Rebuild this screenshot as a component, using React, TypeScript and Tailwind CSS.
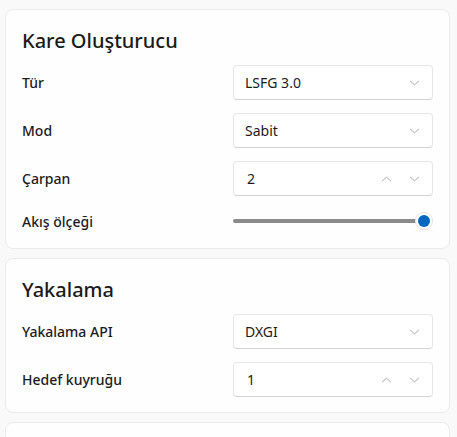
import React from 'react';

const font = { fontFamily: '"Noto Sans", "Open Sans", sans-serif' };

function ChevronDown({ className = '' }: { className?: string }) {
    return (
        <svg viewBox="0 0 12 8" className={className} fill="none" stroke="currentColor" strokeWidth="1" strokeLinecap="round" strokeLinejoin="round">
            <path d="M1.5 2 L6 6 L10.5 2" />
        </svg>
    );
}

function ChevronUp({ className = '' }: { className?: string }) {
    return (
        <svg viewBox="0 0 12 8" className={className} fill="none" stroke="currentColor" strokeWidth="1" strokeLinecap="round" strokeLinejoin="round">
            <path d="M1.5 6 L6 2 L10.5 6" />
        </svg>
    );
}

function ComboBox({ value }: { value: string }) {
    return (
        <div className="w-[200px] h-[35px] flex items-center justify-between pl-[11px] pr-[12px] bg-white rounded-[4px] border border-[#e6e6e6] border-b-[#d2d2d2] text-[14px] text-[#1b1b1b]">
            <span>{value}</span>
            <ChevronDown className="w-[11px] h-[8px] text-[#a0a0a0]" />
        </div>
    );
}

function NumberBox({ value }: { value: string }) {
    return (
        <div className="w-[200px] h-[35px] flex items-center justify-between pl-[13px] pr-[12px] bg-white rounded-[4px] border border-[#e6e6e6] border-b-[#d2d2d2] text-[14px] text-[#1b1b1b]">
            <span>{value}</span>
            <div className="flex items-center gap-[17px]">
                <ChevronUp className="w-[11px] h-[8px] text-[#a0a0a0]" />
                <ChevronDown className="w-[11px] h-[8px] text-[#a0a0a0]" />
            </div>
        </div>
    );
}

function Slider() {
    return (
        <div className="w-[200px] h-[24px] flex items-center">
            <div className="flex-1 h-[4px] rounded-full bg-[#8a8a8a] -mr-[4px]" />
            <div className="w-[18px] h-[18px] rounded-full bg-white border border-[#e3e3e3] flex items-center justify-center">
                <div className="w-[12px] h-[12px] rounded-full bg-[#0067c0]" />
            </div>
        </div>
    );
}

function Row({ label, children }: { label: string; children: React.ReactNode }) {
    return (
        <div className="flex items-center justify-between">
            <span className="text-[14px] font-medium text-[#1b1b1b]">{label}</span>
            {children}
        </div>
    );
}

function Card({ title, children }: { title: string; children: React.ReactNode }) {
    return (
        <div className="w-[445px] bg-[#fefefe] border border-[#ebebeb] rounded-[8px] pt-[17px] pb-[15px] px-[16px]">
            <h2 className="text-[20px] leading-[28px] font-medium text-[#1a1a1a] mb-[10px]">{title}</h2>
            <div className="flex flex-col gap-[13px]">{children}</div>
        </div>
    );
}

export default function App() {
    return (
        <div className="w-[457px] h-[437px] overflow-hidden bg-[#f9f9f9] pl-[5px] pt-[9px] flex flex-col gap-[9px]" style={font}>
            <Card title="Kare Oluşturucu">
                <Row label="Tür"><ComboBox value="LSFG 3.0" /></Row>
                <Row label="Mod"><ComboBox value="Sabit" /></Row>
                <Row label="Çarpan"><NumberBox value="2" /></Row>
                <Row label="Akış ölçeği"><Slider /></Row>
            </Card>
            <Card title="Yakalama">
                <Row label="Yakalama API"><ComboBox value="DXGI" /></Row>
                <Row label="Hedef kuyruğu"><NumberBox value="1" /></Row>
            </Card>
            <div className="w-[445px] h-[80px] shrink-0 bg-[#fefefe] border border-[#ebebeb] rounded-[8px]" />
        </div>
    );
}
